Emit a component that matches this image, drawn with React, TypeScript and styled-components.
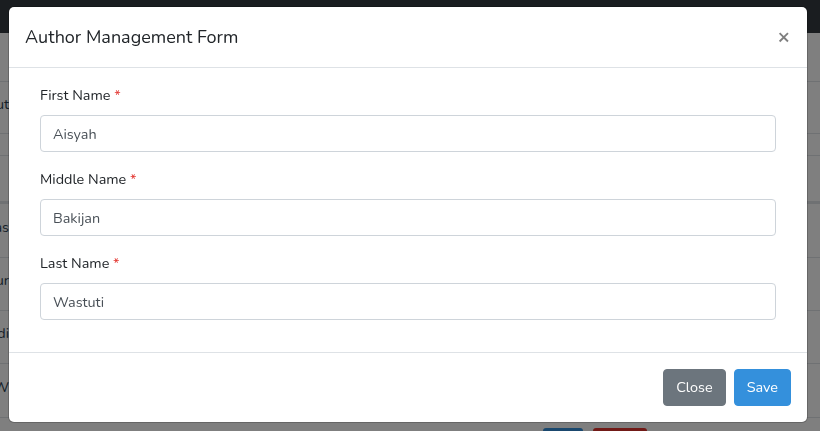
import React from "react";
import styled, { createGlobalStyle } from "styled-components";

const Global = createGlobalStyle`
  * { box-sizing: border-box; }
  html, body { margin: 0; padding: 0; }
  body {
    font-family: "Nunito", "Open Sans", "Noto Sans", sans-serif;
    font-size: 14.4px;
    line-height: 1.6;
    color: #212529;
    background: #f8fafc;
    overflow: hidden;
  }
`;

/* ---------- background page ---------- */
const Page = styled.div`
  width: 820px;
  height: 431px;
  overflow: hidden;
  display: flex;
  flex-direction: column;
  background: #ffffff;
`;

const Navbar = styled.div`
  height: 33px;
  flex: none;
  background: #343a40;
`;

const Spacer = styled.div`
  height: 48px;
  flex: none;
`;

const Row = styled.div<{ $h: number; $strong?: boolean }>`
  height: ${(p) => p.$h}px;
  flex: none;
  display: flex;
  align-items: center;
  border-top: 1px solid #dee2e6;
  border-bottom: ${(p) => (p.$strong ? "2px solid #dee2e6" : "none")};
`;

const Cut = styled.div`
  width: 9px;
  overflow: hidden;
  display: flex;
  justify-content: flex-end;
  white-space: nowrap;
  color: #2d3e50;
  margin-top: -6px;
`;

const SmallBtns = styled.div`
  display: flex;
  gap: 10px;
  margin-left: 543px;
  align-self: flex-start;
  margin-top: 10px;
`;

const SmallBtn = styled.div<{ $bg: string; $w: number }>`
  width: ${(p) => p.$w}px;
  height: 28px;
  border-radius: 3px;
  background: ${(p) => p.$bg};
`;

/* ---------- modal ---------- */
const Backdrop = styled.div`
  position: fixed;
  inset: 0;
  background: rgba(0, 0, 0, 0.5);
  display: flex;
  align-items: flex-start;
`;

const Dialog = styled.div`
  width: 798px;
  margin: 7px 0 0 9px;
  background: #fff;
  border-radius: 5px;
  box-shadow: 0 0 0 1px rgba(0, 0, 0, 0.2);
  display: flex;
  flex-direction: column;
`;

const Header = styled.div`
  display: flex;
  align-items: flex-start;
  justify-content: space-between;
  padding: 16px;
  border-bottom: 1px solid #dee2e6;
  height: 61px;
`;

const Title = styled.h5`
  margin: 0;
  font-size: 18px;
  font-weight: 400;
  line-height: 28.8px;
  color: #212529;
`;

const CloseX = styled.button`
  border: 0;
  background: transparent;
  padding: 0;
  margin: 0 1px 0 0;
  font-family: "Open Sans", sans-serif;
  font-size: 22px;
  font-weight: 600;
  line-height: 26px;
  color: #000;
  opacity: 0.5;
  cursor: pointer;
`;

const Body = styled.div`
  padding: 16px 31px 32px 31px;
  display: flex;
  flex-direction: column;
  gap: 16px;
`;

const Group = styled.div`
  display: flex;
  flex-direction: column;
  gap: 8px;
`;

const Label = styled.label`
  display: block;
  line-height: 23px;
  color: #212529;
`;

const Required = styled.span`
  color: #e3342f;
`;

const Input = styled.input`
  width: 100%;
  height: 37px;
  padding: 6px 12px;
  font: inherit;
  color: #495057;
  background: #fff;
  border: 1px solid #ced4da;
  border-radius: 4px;
  outline: none;
`;

const Footer = styled.div`
  border-top: 1px solid #dee2e6;
  padding: 16px;
  display: flex;
  justify-content: flex-end;
  gap: 8px;
`;

const Button = styled.button<{ $variant: "secondary" | "primary" }>`
  height: 37px;
  padding: 0 12px;
  border: 1px solid
    ${(p) => (p.$variant === "primary" ? "#3490dc" : "#6c757d")};
  background: ${(p) => (p.$variant === "primary" ? "#3490dc" : "#6c757d")};
  color: #fff;
  font: inherit;
  border-radius: 4px;
  cursor: pointer;
`;

const fields = [
  { label: "First Name", value: "Aisyah" },
  { label: "Middle Name", value: "Bakijan" },
  { label: "Last Name", value: "Wastuti" },
];

export default function App() {
  return (
    <>
      <Global />
      <Page>
        <Navbar />
        <Spacer />
        <Row $h={52}>
          <Cut>About</Cut>
        </Row>
        <Row $h={22} />
        <Row $h={48} $strong />
        <Row $h={54}>
          <Cut>Dias</Cut>
        </Row>
        <Row $h={53}>
          <Cut>Ahmadur</Cut>
        </Row>
        <Row $h={53}>
          <Cut>Wadi</Cut>
        </Row>
        <Row $h={54}>
          <Cut>W</Cut>
        </Row>
        <Row $h={40}>
          <SmallBtns>
            <SmallBtn $bg="#3490dc" $w={40} />
            <SmallBtn $bg="#e3342f" $w={54} />
          </SmallBtns>
        </Row>
      </Page>
      <Backdrop>
        <Dialog>
          <Header>
            <Title>Author Management Form</Title>
            <CloseX aria-label="Close">×</CloseX>
          </Header>
          <Body>
            {fields.map((f) => (
              <Group key={f.label}>
                <Label>
                  {f.label} <Required>*</Required>
                </Label>
                <Input defaultValue={f.value} />
              </Group>
            ))}
          </Body>
          <Footer>
            <Button $variant="secondary">Close</Button>
            <Button $variant="primary">Save</Button>
          </Footer>
        </Dialog>
      </Backdrop>
    </>
  );
}
